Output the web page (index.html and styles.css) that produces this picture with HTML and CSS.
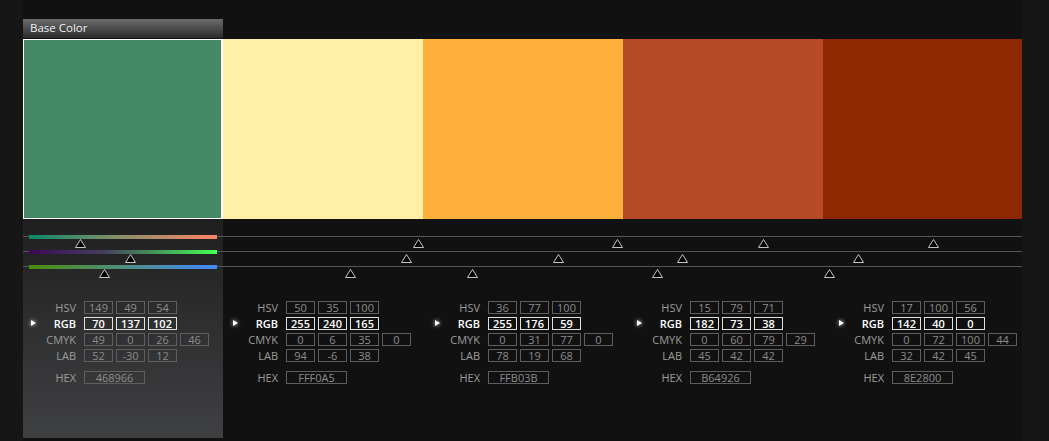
FILE: index.html
```html
<!DOCTYPE html>
<html>
<head>
<meta charset="utf-8">
<link rel="stylesheet" href="styles.css">
</head>
<body>
<div class="app">
  <div class="tab">Base Color</div>
  <div class="swatches">
    <div class="swatch base" style="background:#468966"></div>
    <div class="swatch" style="background:#FFF0A5"></div>
    <div class="swatch" style="background:#FFB03B"></div>
    <div class="swatch" style="background:#B64926"></div>
    <div class="swatch" style="background:#8E2800"></div>
  </div>
  <div class="lower">
    <div class="panel"></div>
    <div class="sliders">
      <div class="slider">
        <div class="bar bar-h"></div>
        <svg class="tri" style="left:51.5px" width="11" height="9"><polygon points="5.5,0.5 10.5,8.5 0.5,8.5"/></svg>
        <svg class="tri" style="left:389.5px" width="11" height="9"><polygon points="5.5,0.5 10.5,8.5 0.5,8.5"/></svg>
        <svg class="tri" style="left:588.5px" width="11" height="9"><polygon points="5.5,0.5 10.5,8.5 0.5,8.5"/></svg>
        <svg class="tri" style="left:734.5px" width="11" height="9"><polygon points="5.5,0.5 10.5,8.5 0.5,8.5"/></svg>
        <svg class="tri" style="left:904.5px" width="11" height="9"><polygon points="5.5,0.5 10.5,8.5 0.5,8.5"/></svg>
      </div>
      <div class="slider">
        <div class="bar bar-s"></div>
        <svg class="tri" style="left:101.5px" width="11" height="9"><polygon points="5.5,0.5 10.5,8.5 0.5,8.5"/></svg>
        <svg class="tri" style="left:377.5px" width="11" height="9"><polygon points="5.5,0.5 10.5,8.5 0.5,8.5"/></svg>
        <svg class="tri" style="left:529.5px" width="11" height="9"><polygon points="5.5,0.5 10.5,8.5 0.5,8.5"/></svg>
        <svg class="tri" style="left:653.5px" width="11" height="9"><polygon points="5.5,0.5 10.5,8.5 0.5,8.5"/></svg>
        <svg class="tri" style="left:829.5px" width="11" height="9"><polygon points="5.5,0.5 10.5,8.5 0.5,8.5"/></svg>
      </div>
      <div class="slider">
        <div class="bar bar-v"></div>
        <svg class="tri" style="left:75.5px" width="11" height="9"><polygon points="5.5,0.5 10.5,8.5 0.5,8.5"/></svg>
        <svg class="tri" style="left:321.5px" width="11" height="9"><polygon points="5.5,0.5 10.5,8.5 0.5,8.5"/></svg>
        <svg class="tri" style="left:443.5px" width="11" height="9"><polygon points="5.5,0.5 10.5,8.5 0.5,8.5"/></svg>
        <svg class="tri" style="left:628.5px" width="11" height="9"><polygon points="5.5,0.5 10.5,8.5 0.5,8.5"/></svg>
        <svg class="tri" style="left:800.5px" width="11" height="9"><polygon points="5.5,0.5 10.5,8.5 0.5,8.5"/></svg>
      </div>
    </div>

    <div class="info info-1">
      <div class="row"><span class="mark"></span><span class="lbl">HSV</span><span class="box">149</span><span class="box">49</span><span class="box">54</span></div>
      <div class="row rgb"><span class="mark on"></span><span class="lbl">RGB</span><span class="box">70</span><span class="box">137</span><span class="box">102</span></div>
      <div class="row"><span class="mark"></span><span class="lbl">CMYK</span><span class="box">49</span><span class="box">0</span><span class="box">26</span><span class="box">46</span></div>
      <div class="row"><span class="mark"></span><span class="lbl">LAB</span><span class="box">52</span><span class="box">-30</span><span class="box">12</span></div>
      <div class="row hex"><span class="mark"></span><span class="lbl">HEX</span><span class="box wide">468966</span></div>
    </div>
    <div class="info info-2">
      <div class="row"><span class="mark"></span><span class="lbl">HSV</span><span class="box">50</span><span class="box">35</span><span class="box">100</span></div>
      <div class="row rgb"><span class="mark on"></span><span class="lbl">RGB</span><span class="box">255</span><span class="box">240</span><span class="box">165</span></div>
      <div class="row"><span class="mark"></span><span class="lbl">CMYK</span><span class="box">0</span><span class="box">6</span><span class="box">35</span><span class="box">0</span></div>
      <div class="row"><span class="mark"></span><span class="lbl">LAB</span><span class="box">94</span><span class="box">-6</span><span class="box">38</span></div>
      <div class="row hex"><span class="mark"></span><span class="lbl">HEX</span><span class="box wide">FFF0A5</span></div>
    </div>
    <div class="info info-3">
      <div class="row"><span class="mark"></span><span class="lbl">HSV</span><span class="box">36</span><span class="box">77</span><span class="box">100</span></div>
      <div class="row rgb"><span class="mark on"></span><span class="lbl">RGB</span><span class="box">255</span><span class="box">176</span><span class="box">59</span></div>
      <div class="row"><span class="mark"></span><span class="lbl">CMYK</span><span class="box">0</span><span class="box">31</span><span class="box">77</span><span class="box">0</span></div>
      <div class="row"><span class="mark"></span><span class="lbl">LAB</span><span class="box">78</span><span class="box">19</span><span class="box">68</span></div>
      <div class="row hex"><span class="mark"></span><span class="lbl">HEX</span><span class="box wide">FFB03B</span></div>
    </div>
    <div class="info info-4">
      <div class="row"><span class="mark"></span><span class="lbl">HSV</span><span class="box">15</span><span class="box">79</span><span class="box">71</span></div>
      <div class="row rgb"><span class="mark on"></span><span class="lbl">RGB</span><span class="box">182</span><span class="box">73</span><span class="box">38</span></div>
      <div class="row"><span class="mark"></span><span class="lbl">CMYK</span><span class="box">0</span><span class="box">60</span><span class="box">79</span><span class="box">29</span></div>
      <div class="row"><span class="mark"></span><span class="lbl">LAB</span><span class="box">45</span><span class="box">42</span><span class="box">42</span></div>
      <div class="row hex"><span class="mark"></span><span class="lbl">HEX</span><span class="box wide">B64926</span></div>
    </div>
    <div class="info info-5">
      <div class="row"><span class="mark"></span><span class="lbl">HSV</span><span class="box">17</span><span class="box">100</span><span class="box">56</span></div>
      <div class="row rgb"><span class="mark on"></span><span class="lbl">RGB</span><span class="box">142</span><span class="box">40</span><span class="box">0</span></div>
      <div class="row"><span class="mark"></span><span class="lbl">CMYK</span><span class="box">0</span><span class="box">72</span><span class="box">100</span><span class="box">44</span></div>
      <div class="row"><span class="mark"></span><span class="lbl">LAB</span><span class="box">32</span><span class="box">42</span><span class="box">45</span></div>
      <div class="row hex"><span class="mark"></span><span class="lbl">HEX</span><span class="box wide">8E2800</span></div>
    </div>
  </div>
</div>
</body>
</html>
```

FILE: styles.css
```css
* { box-sizing: border-box; }
html, body {
  margin: 0;
  padding: 0;
  background: #161616;
  font-family: "Open Sans", "Noto Sans", "Liberation Sans", sans-serif;
}
.app {
  margin-left: 23px;
  width: 999px;
  height: 441px;
  background: #111111;
  overflow: hidden;
  padding-top: 19px;
}
.tab {
  width: 200px;
  height: 19px;
  background: linear-gradient(#6b6b6b, #2b2b2b);
  color: #f0f0f0;
  font-size: 11.5px;
  line-height: 18px;
  padding-left: 7px;
}
.swatches {
  margin-top: 1px;
  display: flex;
  height: 180px;
}
.swatch {
  width: 200px;
  height: 180px;
  flex: none;
}
.swatch.base {
  border: 1px solid #ffffff;
  border-right-width: 2px;
}
.lower {
  display: grid;
  grid-template-columns: 200px 2px 202px 202px 202px 202px;
  grid-template-rows: 62px 157px;
  height: 219px;
}
.panel {
  grid-column: 1;
  grid-row: 1 / 3;
  background: linear-gradient(#1f1f1f, #3f4042);
}
.sliders {
  grid-column: 1 / -1;
  grid-row: 1;
  padding-top: 16px;
  width: 999px;
  z-index: 1;
}
.slider {
  position: relative;
  height: 15px;
}
.slider::before {
  content: "";
  position: absolute;
  left: 0;
  right: 0;
  top: 1px;
  height: 1px;
  background: #555555;
}
.bar {
  position: absolute;
  left: 6px;
  width: 188px;
  top: 0;
  height: 4px;
}
.bar-h { background: linear-gradient(to right, #0a8869, #8c8f6a 50%, #ff8466); }
.bar-s { background: linear-gradient(to right, #3d0858, #45405e 40%, #45ff55); }
.bar-v { background: linear-gradient(to right, #4a8c0c, #4f8f80 50%, #4488ff); }
.tri {
  position: absolute;
  top: 4px;
  display: block;
}
.tri polygon {
  fill: #000000;
  stroke: #c4c4c4;
  stroke-width: 1;
}
.info {
  grid-row: 2;
  padding-top: 19px;
  z-index: 1;
}
.info-1 { grid-column: 1 / 3; }
.info-2 { grid-column: 3; }
.info-3 { grid-column: 4; }
.info-4 { grid-column: 5; }
.info-5 { grid-column: 6; }
.row {
  display: flex;
  align-items: flex-start;
  height: 16px;
  padding-left: 7px;
}
.row.hex { margin-top: 6px; }
.mark {
  width: 7px;
  height: 15px;
  flex: none;
  position: relative;
}
.mark.on::after {
  content: "";
  position: absolute;
  left: 1px;
  top: 4px;
  border-left: 5px solid #ffffff;
  border-top: 3.5px solid transparent;
  border-bottom: 3.5px solid transparent;
  filter: drop-shadow(0 0 2px rgba(255,255,255,0.9));
}
.lbl {
  width: 39px;
  flex: none;
  text-align: right;
  margin-right: 8px;
  color: #9c9c9c;
  font-size: 11px;
  line-height: 15px;
}
.box {
  width: 29px;
  height: 13px;
  margin-top: 1px;
  margin-right: 3px;
  flex: none;
  border: 1px solid #5e5e5e;
  color: #8c8c8c;
  font-size: 11px;
  line-height: 11px;
  text-align: center;
}
.box.wide { width: 61px; }
.rgb .lbl { color: #ffffff; font-weight: 600; }
.rgb .box {
  border-color: #e0e0e0;
  color: #ffffff;
  font-weight: 600;
}
```
